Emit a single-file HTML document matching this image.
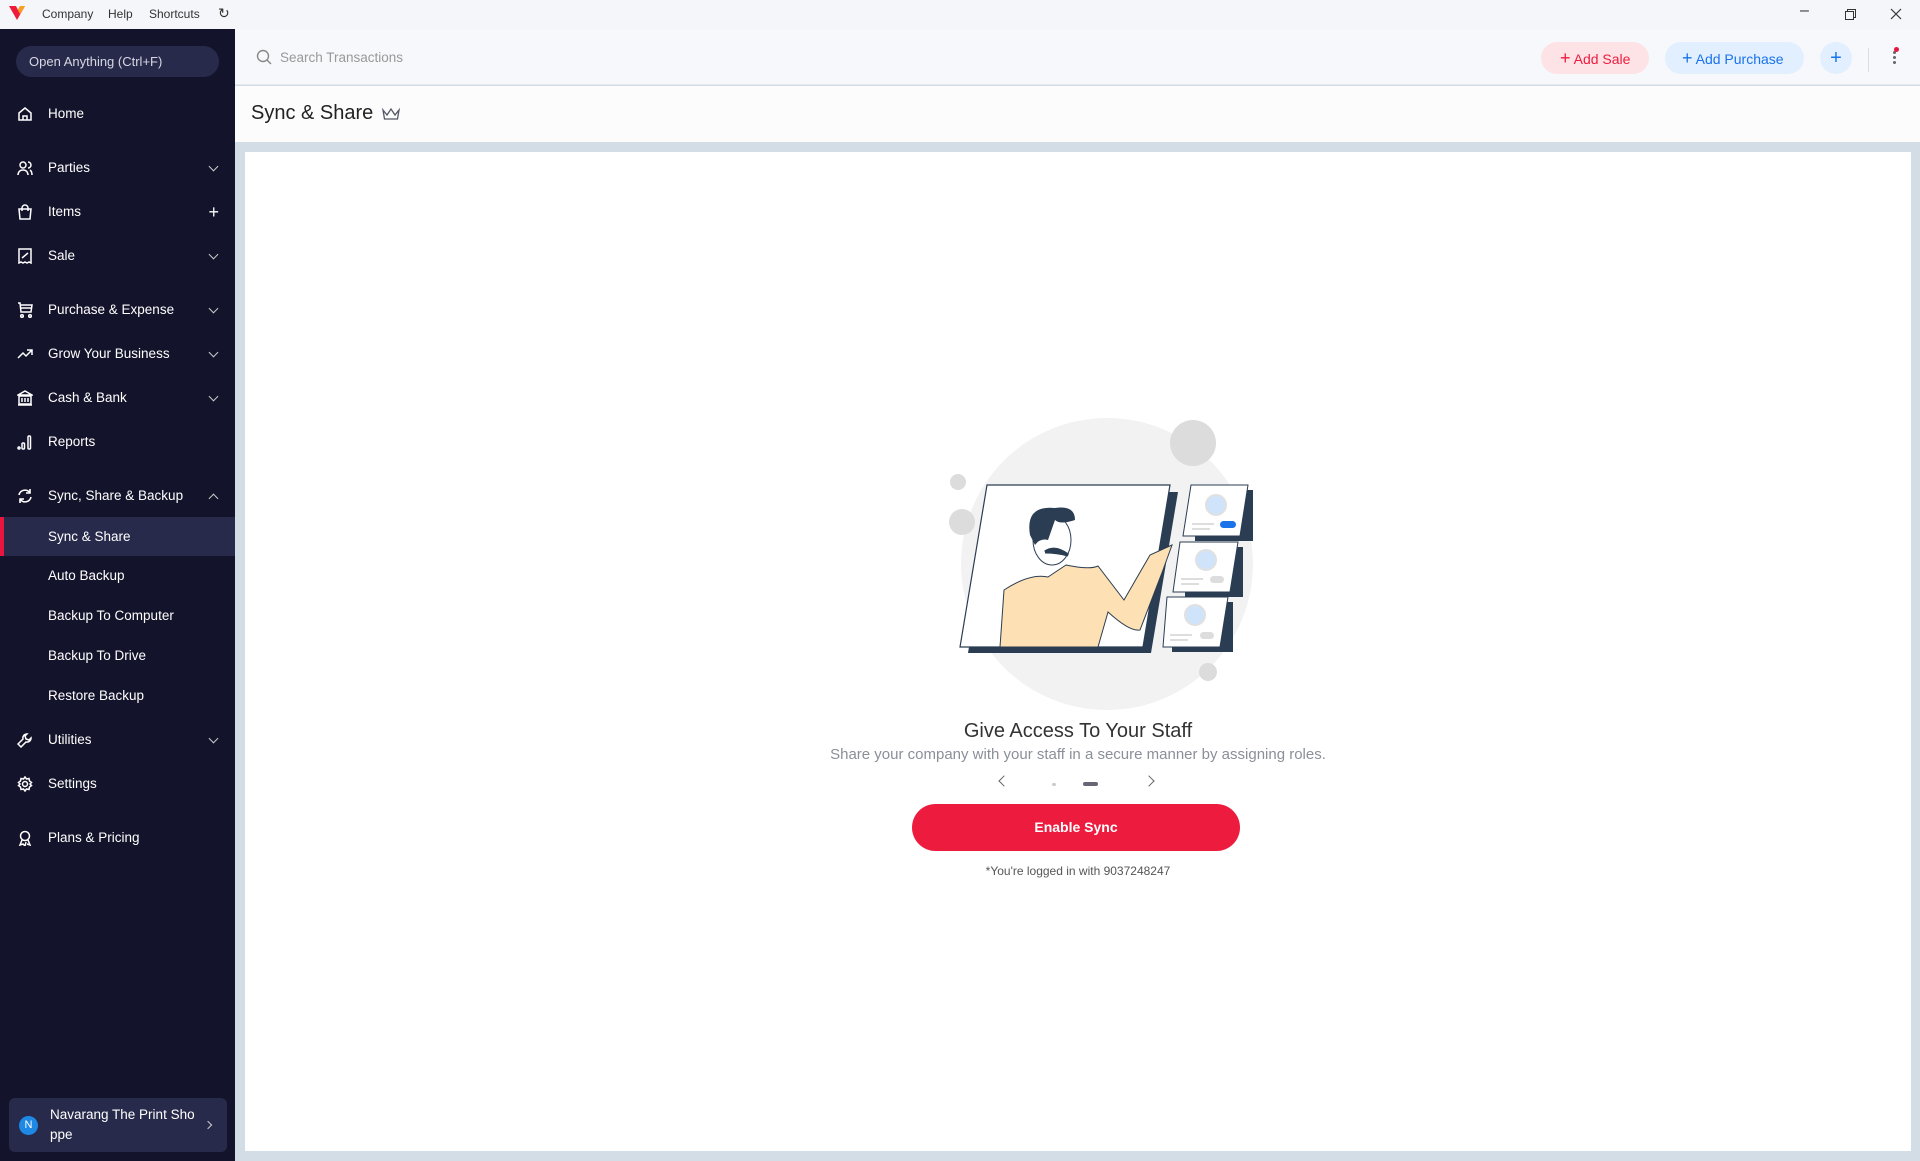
<!DOCTYPE html>
<html><head><meta charset="utf-8"><style>
*{margin:0;padding:0;box-sizing:border-box}
body{width:1920px;height:1161px;overflow:hidden;font-family:"Liberation Sans",Arial,sans-serif;background:#d3dde6;position:relative}
.tb{position:absolute;left:0;top:0;width:1920px;height:29px;background:#f5f6fa;font-size:12px;color:#333}
.tb span{position:absolute;top:7px}
.sb{position:absolute;left:0;top:29px;width:235px;height:1132px;background:#13132b;color:#fff}
.pill{position:absolute;left:16px;top:17px;width:203px;height:31px;border-radius:16px;background:#272a4a;color:#d8d8e4;font-size:13px;line-height:31px;padding-left:13px}
.it{position:absolute;left:0;width:235px;height:36px;font-size:13.5px;line-height:36px;padding-left:48px;color:#fff}
.it svg.ic{position:absolute;left:17px;top:10px}
.it .ch{position:absolute;right:18px;top:13px;width:7px;height:7px;border-right:1.6px solid #ccc;border-bottom:1.6px solid #ccc;transform:rotate(45deg)}
.it .up{top:17px;transform:rotate(-135deg)}
.sub{position:absolute;left:0;width:235px;height:36px;font-size:13.5px;line-height:36px;padding-left:48px;color:#fff}
.hd{position:absolute;left:235px;top:29px;width:1685px;height:56px;background:#f7f8fb;border-bottom:1px solid #e8e9ee}
.tt{position:absolute;left:235px;top:86px;width:1685px;height:56px;background:#fcfcfd}
.card{position:absolute;left:245px;top:152px;width:1666px;height:999px;background:#fff}
.btn{position:absolute;top:13px;height:32px;border-radius:16px;font-size:14px;line-height:32px}
</style></head><body>
<div class="tb">
<svg style="position:absolute;left:9px;top:6px" width="16" height="14" viewBox="0 0 16 14"><path d="M0 0h7l2 4 2-4h5l-8 14z" fill="#ee1c3a"/><path d="M9 4l2-4h5l-5 8z" fill="#f9a11b"/></svg>
<span style="left:42px">Company</span><span style="left:108px">Help</span><span style="left:149px">Shortcuts</span><span style="left:218px;font-size:14px;top:5px">↻</span>
<span style="left:1800px;top:2px;font-size:16px">–</span>
<svg style="position:absolute;left:1845px;top:9px" width="11" height="11"><rect x="0.5" y="2.5" width="8" height="8" fill="none" stroke="#333"/><path d="M2.5 2.5V.5h8v8h-2" fill="none" stroke="#333"/></svg>
<svg style="position:absolute;left:1890px;top:8px" width="12" height="12"><path d="M1 1l10 10M11 1L1 11" stroke="#333" stroke-width="1.2"/></svg>
</div>
<div class="sb">
<div class="pill">Open Anything (Ctrl+F)</div>
<div class="it" style="top:67px"><svg class="ic" width="16" height="16" viewBox="0 0 16 16" fill="none" stroke="#fff" stroke-width="1.5"><path d="M2 7l6-5 6 5v7H2z"/><path d="M6 14v-4h4v4"/></svg>Home</div>
<div class="it" style="top:121px"><svg class="ic" width="16" height="16" viewBox="0 0 16 16" fill="none" stroke="#fff" stroke-width="1.5"><circle cx="6" cy="5" r="3"/><path d="M1 15c0-3 2-5 5-5s5 2 5 5M11 2a3 3 0 010 6M13 10c1.5 1 2 3 2 5"/></svg>Parties<i class="ch"></i></div>
<div class="it" style="top:165px"><svg class="ic" width="16" height="16" viewBox="0 0 16 16" fill="none" stroke="#fff" stroke-width="1.5"><path d="M2 5h12l-1 10H3z"/><path d="M5 7V4a3 3 0 016 0v3"/></svg>Items<span style="position:absolute;right:16px;font-size:18px">+</span></div>
<div class="it" style="top:209px"><svg class="ic" width="16" height="16" viewBox="0 0 16 16" fill="none" stroke="#fff" stroke-width="1.5"><path d="M2 1h12v14l-2-1-2 1-2-1-2 1-2-1-2 1z"/><path d="M5 10l6-5"/></svg>Sale<i class="ch"></i></div>
<div class="it" style="top:263px"><svg class="ic" width="16" height="16" viewBox="0 0 16 16" fill="none" stroke="#fff" stroke-width="1.5"><path d="M1 1h2l1 9h10l1-7H4M4 6h11"/><circle cx="5" cy="14" r="1.3"/><circle cx="13" cy="14" r="1.3"/></svg>Purchase &amp; Expense<i class="ch"></i></div>
<div class="it" style="top:307px"><svg class="ic" width="16" height="16" viewBox="0 0 16 16" fill="none" stroke="#fff" stroke-width="1.5"><path d="M1 12l5-5 3 3 6-6M10 4h5v5"/></svg>Grow Your Business<i class="ch"></i></div>
<div class="it" style="top:351px"><svg class="ic" width="16" height="16" viewBox="0 0 16 16" fill="none" stroke="#fff" stroke-width="1.5"><path d="M1 5l7-4 7 4zM2 6h12v8H2zM5 8v4M8 8v4M11 8v4M1 15h14"/></svg>Cash &amp; Bank<i class="ch"></i></div>
<div class="it" style="top:395px"><svg class="ic" width="16" height="16" viewBox="0 0 16 16" fill="none" stroke="#fff" stroke-width="1.5"><circle cx="2" cy="14" r="1"/><rect x="5" y="9" width="2.5" height="6" rx="1"/><rect x="11" y="2" width="2.5" height="13" rx="1"/></svg>Reports</div>
<div class="it" style="top:449px"><svg class="ic" width="16" height="16" viewBox="0 0 16 16" fill="none" stroke="#fff" stroke-width="1.6"><path d="M2 7a6 6 0 0111-2M14 9a6 6 0 01-11 2M13 1v4H9M3 15v-4h4"/></svg>Sync, Share &amp; Backup<i class="ch up"></i></div>
<div class="sub" style="top:488px;height:39px;line-height:39px;background:#272a4a;border-left:4px solid #e8163e;padding-left:44px">Sync &amp; Share</div>
<div class="sub" style="top:529px">Auto Backup</div>
<div class="sub" style="top:569px">Backup To Computer</div>
<div class="sub" style="top:609px">Backup To Drive</div>
<div class="sub" style="top:649px">Restore Backup</div>
<div class="it" style="top:693px"><svg class="ic" width="16" height="16" viewBox="0 0 16 16" fill="none" stroke="#fff" stroke-width="1.5"><path d="M10 2a4 4 0 00-4 5L1 12l3 3 5-5a4 4 0 005-4l-2 2-3-1-1-3z"/></svg>Utilities<i class="ch"></i></div>
<div class="it" style="top:737px"><svg class="ic" width="16" height="16" viewBox="0 0 16 16" fill="none" stroke="#fff" stroke-width="1.5"><circle cx="8" cy="8" r="2.5"/><path d="M8 1l1.5 2 2.5-.5.5 2.5 2 1.5-1.5 1.5 1.5 1.5-2 1.5-.5 2.5-2.5-.5L8 15l-1.5-2-2.5.5-.5-2.5-2-1.5L3 8 1.5 6.5l2-1.5.5-2.5 2.5.5z"/></svg>Settings</div>
<div class="it" style="top:791px"><svg class="ic" width="16" height="16" viewBox="0 0 16 16" fill="none" stroke="#fff" stroke-width="1.5"><circle cx="8" cy="6" r="4.5"/><path d="M5 10l-2 5 3-1 2 2 1-4M11 10l2 5-3-1"/></svg>Plans &amp; Pricing</div>
<div style="position:absolute;left:9px;top:1069px;width:218px;height:54px;background:#272a4a;border-radius:6px">
<div style="position:absolute;left:10px;top:18px;width:19px;height:19px;border-radius:50%;background:#1e88e5;color:#fff;font-size:11px;text-align:center;line-height:19px">N</div>
<div style="position:absolute;left:41px;top:7px;font-size:13.5px;line-height:20px;width:150px">Navarang The Print Sho ppe</div>
<i style="position:absolute;right:16px;top:24px;width:6px;height:6px;border-right:1.5px solid #ccc;border-bottom:1.5px solid #ccc;transform:rotate(-45deg)"></i>
</div>
</div>
<div class="hd">
<svg style="position:absolute;left:21px;top:20px" width="16" height="16" fill="none" stroke="#888" stroke-width="1.4"><circle cx="7" cy="7" r="5.5"/><path d="M11 11l4 4"/></svg>
<span style="position:absolute;left:45px;top:21px;font-size:13.5px;color:#999">Search Transactions</span>
<div class="btn" style="left:1306px;width:108px;background:#fde3e6;color:#ec1c3f;padding-left:19px"><b style="font-weight:normal;font-size:18px">+</b> Add Sale</div>
<div class="btn" style="left:1430px;width:139px;background:#e1efff;color:#1a73e8;padding-left:17px"><b style="font-weight:normal;font-size:18px">+</b> Add Purchase</div>
<div class="btn" style="left:1585px;width:32px;background:#e1efff;color:#1a73e8;text-align:center;font-size:20px">+</div>
<div style="position:absolute;left:1633px;top:19px;width:1px;height:24px;background:#ddd"></div>
<div style="position:absolute;left:1658px;top:22px;width:3px;height:3px;background:#666;border-radius:50%;box-shadow:0 5px 0 #666,0 10px 0 #666"></div>
<div style="position:absolute;left:1659px;top:18px;width:5px;height:5px;background:#e8163e;border-radius:50%"></div>
</div>
<div class="tt"><span style="position:absolute;left:16px;top:16px;font-size:20px;color:#222">Sync &amp; Share</span>
<svg style="position:absolute;left:146px;top:21px" width="20" height="15" fill="none" stroke="#556" stroke-width="1.3"><path d="M2 3l4 5 4-6 4 6 4-5-1.5 9h-13z"/></svg></div>
<div class="card"></div>
<svg style="position:absolute;left:0;top:0" width="1920" height="1161">
<circle cx="1107" cy="564" r="146" fill="#f2f2f2"/>
<circle cx="1193" cy="443" r="23" fill="#dcdcdc"/>
<circle cx="958" cy="482" r="8" fill="#dcdcdc"/>
<circle cx="962" cy="522" r="13" fill="#dcdcdc"/>
<circle cx="1208" cy="672" r="9" fill="#dcdcdc"/>
<polygon points="995,492 1178,492 1151,653 968,653" fill="#2b3d52"/>
<polygon points="987,485 1170,485 1143,647 960,647" fill="#fff" stroke="#2b3d52" stroke-width="1.2"/>
<path d="M1000 647 L1004 590 Q1030 573 1048 577 L1066 565 Q1090 570 1098 566 L1124 600 L1150 555 L1172 545 L1163 570 L1140 630 Q1130 632 1108 612 L1098 647z" fill="#fde0b3" stroke="#2b3d52" stroke-width="1"/>
<ellipse cx="1052" cy="540" rx="19" ry="25" fill="#fff" stroke="#2b3d52"/>
<path d="M1030 535 Q1025 505 1055 508 Q1075 505 1075 520 Q1060 525 1055 520 L1048 540 Q1040 538 1035 545z" fill="#2b3d52"/>
<path d="M1045 552 Q1055 545 1068 555 Q1057 552 1045 552" fill="#2b3d52" stroke="#2b3d52" stroke-width="3"/>
<g fill="#2b3d52"><rect x="1195" y="490" width="58" height="51"/><rect x="1185" y="547" width="58" height="50"/><rect x="1172" y="602" width="61" height="50"/></g>
<g fill="#fff" stroke="#2b3d52" stroke-width="1"><polygon points="1191,485 1248,485 1240,536 1183,536"/><polygon points="1180,542 1238,542 1230,592 1173,592"/><polygon points="1167,597 1228,597 1220,647 1163,647"/></g>
<g fill="#cfe4fb" stroke="#e0e0e0" stroke-width="2"><circle cx="1216" cy="505" r="10"/><circle cx="1206" cy="560" r="10"/><circle cx="1195" cy="615" r="10"/></g>
<rect x="1220" y="521" width="16" height="7" rx="3.5" fill="#1a73e8"/>
<rect x="1210" y="576" width="14" height="7" rx="3.5" fill="#ddd"/>
<rect x="1200" y="632" width="14" height="7" rx="3.5" fill="#ddd"/>
<g stroke="#ddd" stroke-width="2"><path d="M1192 524h22M1192 529h18M1181 579h22M1181 584h18M1170 635h22M1170 640h18"/></g>
</svg>
<div style="position:absolute;left:245px;width:1666px;top:720px;text-align:center;font-size:20px;color:#333">Give Access To Your Staff</div>
<div style="position:absolute;left:245px;width:1666px;top:746px;text-align:center;font-size:15px;color:#8a8f99">Share your company with your staff in a secure manner by assigning roles.</div>
<i style="position:absolute;left:1000px;top:777px;width:8px;height:8px;border-left:1.6px solid #666;border-bottom:1.6px solid #666;transform:rotate(45deg)"></i>
<i style="position:absolute;left:1145px;top:777px;width:8px;height:8px;border-right:1.6px solid #666;border-top:1.6px solid #666;transform:rotate(45deg)"></i>
<div style="position:absolute;left:1052px;top:783px;width:4px;height:3px;background:#ccc;border-radius:2px"></div>
<div style="position:absolute;left:1083px;top:782px;width:15px;height:4px;background:#667;border-radius:2px"></div>
<div style="position:absolute;left:912px;top:804px;width:328px;height:47px;border-radius:24px;background:#ed1c3f;color:#fff;font-size:14px;font-weight:bold;text-align:center;line-height:47px">Enable Sync</div>
<div style="position:absolute;left:245px;width:1666px;top:864px;text-align:center;font-size:12px;color:#555">*You're logged in with 9037248247</div>
</body></html>
